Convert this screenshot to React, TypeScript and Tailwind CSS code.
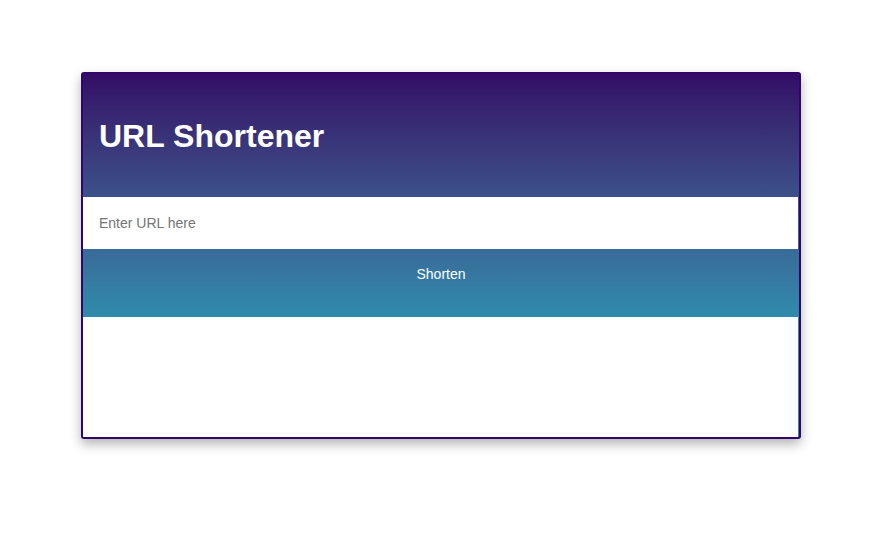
import { useState } from "react";

export default function App() {
  const [url, setUrl] = useState("");

  return (
    <div className="min-h-screen w-full bg-white pt-[72px] pl-[81px] font-['Liberation_Sans',Arial,sans-serif]">
      <div className="w-[720px] overflow-hidden rounded-[3px] border-2 border-[#30066b] bg-[#2f8cad] shadow-[0_5px_12px_rgba(0,0,0,0.3)]">
        <div className="bg-linear-to-b from-[#330c66] to-[#2e8cac]">
          <div className="flex h-[123px] items-center px-4">
            <h1 className="text-[32px] font-bold text-white">URL Shortener</h1>
          </div>
          <input
            type="text"
            value={url}
            onChange={(e) => setUrl(e.target.value)}
            placeholder="Enter URL here"
            className="mr-px block h-[52px] w-[calc(100%-1px)] bg-white px-4 text-sm text-[#333] outline-none placeholder:text-[#757575]"
          />
          <button
            type="button"
            className="flex h-[68px] w-full items-start justify-center pt-[15px] text-sm leading-5 text-white"
          >
            Shorten
          </button>
        </div>
        <div className="mr-px h-[120px] bg-white" />
      </div>
    </div>
  );
}
